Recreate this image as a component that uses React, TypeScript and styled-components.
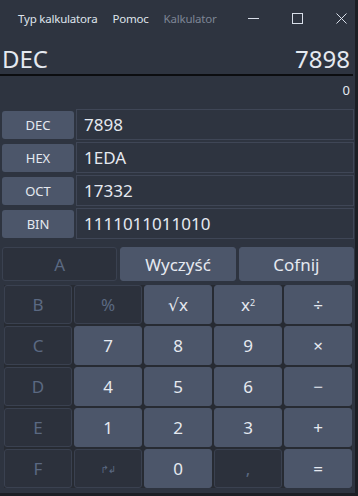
import React from "react";
import styled, { createGlobalStyle } from "styled-components";

const GlobalStyle = createGlobalStyle`
  html, body {
    margin: 0;
    padding: 0;
    background: #1c1f25;
  }
  * {
    box-sizing: border-box;
  }
`;

const Window = styled.div`
  width: 355px;
  height: 493px;
  background: #2e3440;
  color: #d8dee9;
  font-family: "Noto Sans", "DejaVu Sans", sans-serif;
  display: flex;
  flex-direction: column;
  overflow: hidden;
`;

const TitleBar = styled.div`
  height: 36px;
  display: flex;
  align-items: center;
  padding-left: 18px;
`;

const MenuItem = styled.span<{ $muted?: boolean }>`
  font-size: 11.5px;
  letter-spacing: -0.2px;
  color: ${(p) => (p.$muted ? "#7d8595" : "#dfe4ec")};
  margin-right: 15px;
  white-space: nowrap;
`;

const Controls = styled.div`
  margin-left: auto;
  display: flex;
  height: 100%;
`;

const ControlButton = styled.div`
  width: 44px;
  height: 100%;
  display: flex;
  align-items: center;
  justify-content: center;
  color: #d8dee9;
`;

const Display = styled.div`
  height: 40px;
  display: flex;
  align-items: flex-end;
  justify-content: space-between;
  padding: 0 3px 0 2px;
  font-size: 24px;
  line-height: 30px;
  color: #e5e9f0;
  border-bottom: 2px solid #0c0d10;
  width: 353px;
`;

const SubDisplay = styled.div`
  height: 28px;
  padding: 6px 5px 0 0;
  text-align: right;
  font-size: 13px;
  color: #e5e9f0;
  line-height: 16px;
`;

const BaseList = styled.div`
  display: flex;
  flex-direction: column;
  gap: 2px;
  padding: 5px 1px 0 2px;
`;

const BaseRow = styled.div`
  display: flex;
  align-items: center;
  gap: 2px;
  height: 31px;
`;

const BaseButton = styled.div`
  width: 72px;
  height: 28px;
  border-radius: 3px;
  background: #4c566a;
  display: flex;
  align-items: center;
  justify-content: center;
  font-size: 13px;
  color: #e5e9f0;
`;

const BaseValue = styled.div`
  flex: 1;
  height: 31px;
  border: 1px solid #3f4656;
  display: flex;
  align-items: center;
  padding-left: 7px;
  font-size: 17px;
  color: #e5e9f0;
`;

const TopKeys = styled.div`
  margin-top: 8px;
  padding: 0 1px 0 2px;
  display: grid;
  grid-template-columns: repeat(3, 1fr);
  gap: 3px;
  height: 34px;
`;

const KeyGrid = styled.div`
  margin: 4px 3px 0 4px;
  display: grid;
  grid-template-columns: repeat(5, 1fr);
  grid-auto-rows: 39px;
  gap: 2px;
  background: #272b33;
`;

const Key = styled.div<{ $disabled?: boolean }>`
  border-radius: 3px;
  display: flex;
  align-items: center;
  justify-content: center;
  font-size: 17px;
  background: ${(p) => (p.$disabled ? "#2c313c" : "#4c566a")};
  border: 1px solid ${(p) => (p.$disabled ? "#3a4150" : "#4c566a")};
  color: ${(p) => (p.$disabled ? "#5b6982" : "#e5e9f0")};
`;

const Sup = styled.sup`
  font-size: 9px;
  line-height: 0;
  position: relative;
  top: -2px;
`;

const Arrows = styled.span`
  font-size: 10px;
  letter-spacing: -1px;
`;

const bases = [
  ["DEC", "7898"],
  ["HEX", "1EDA"],
  ["OCT", "17332"],
  ["BIN", "1111011011010"],
];

type K = { label: React.ReactNode; disabled?: boolean };

const keys: K[] = [
  { label: "B", disabled: true },
  { label: "%", disabled: true },
  { label: "√x" },
  { label: <>x<Sup>2</Sup></> },
  { label: "÷" },
  { label: "C", disabled: true },
  { label: "7" },
  { label: "8" },
  { label: "9" },
  { label: "×" },
  { label: "D", disabled: true },
  { label: "4" },
  { label: "5" },
  { label: "6" },
  { label: "−" },
  { label: "E", disabled: true },
  { label: "1" },
  { label: "2" },
  { label: "3" },
  { label: "+" },
  { label: "F", disabled: true },
  { label: <Arrows>↱↲</Arrows>, disabled: true },
  { label: "0" },
  { label: ",", disabled: true },
  { label: "=" },
];

const App = () => {
  return (
    <>
      <GlobalStyle />
      <Window>
        <TitleBar>
          <MenuItem>Typ kalkulatora</MenuItem>
          <MenuItem>Pomoc</MenuItem>
          <MenuItem $muted>Kalkulator</MenuItem>
          <Controls>
            <ControlButton>
              <svg width="11" height="11" viewBox="0 0 11 11">
                <line x1="0" y1="5.5" x2="11" y2="5.5" stroke="#d8dee9" strokeWidth="1" />
              </svg>
            </ControlButton>
            <ControlButton>
              <svg width="11" height="11" viewBox="0 0 11 11">
                <rect x="0.5" y="0.5" width="10" height="10" fill="none" stroke="#d8dee9" strokeWidth="1" />
              </svg>
            </ControlButton>
            <ControlButton>
              <svg width="11" height="11" viewBox="0 0 11 11">
                <path d="M0.5 0.5 L10.5 10.5 M10.5 0.5 L0.5 10.5" stroke="#d8dee9" strokeWidth="1" />
              </svg>
            </ControlButton>
          </Controls>
        </TitleBar>
        <Display>
          <span>DEC</span>
          <span>7898</span>
        </Display>
        <SubDisplay>0</SubDisplay>
        <BaseList>
          {bases.map(([name, value]) => (
            <BaseRow key={name}>
              <BaseButton>{name}</BaseButton>
              <BaseValue>{value}</BaseValue>
            </BaseRow>
          ))}
        </BaseList>
        <TopKeys>
          <Key $disabled>A</Key>
          <Key>Wyczyść</Key>
          <Key>Cofnij</Key>
        </TopKeys>
        <KeyGrid>
          {keys.map((k, i) => (
            <Key key={i} $disabled={k.disabled}>
              {k.label}
            </Key>
          ))}
        </KeyGrid>
      </Window>
    </>
  );
};

export default App;
